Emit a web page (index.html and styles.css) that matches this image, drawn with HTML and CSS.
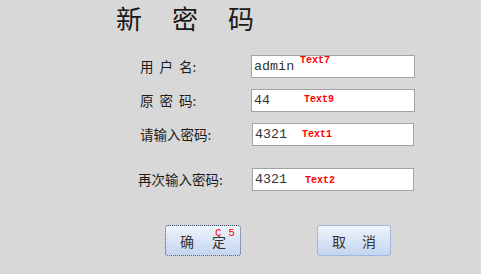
FILE: index.html
```html
<!DOCTYPE html>
<html lang="zh-CN">
<head>
<meta charset="utf-8">
<title>新密码</title>
<link rel="stylesheet" href="styles.css">
</head>
<body>
<div class="page">
  <h1 class="title"><span>新</span><span>密</span><span>码</span></h1>
  <div class="form">
    <div class="row r1">
      <label class="label spaced">用 户 名:</label>
      <div class="field"><span class="val">admin</span><span class="tag t7">Text7</span></div>
    </div>
    <div class="row r2">
      <label class="label spaced">原 密 码:</label>
      <div class="field"><span class="val">44</span><span class="tag t9">Text9</span></div>
    </div>
    <div class="row r3">
      <label class="label">请输入密码:</label>
      <div class="field f3"><span class="val">4321</span><span class="tag t1">Text1</span></div>
    </div>
    <div class="row r4">
      <label class="label l4">再次输入密码:</label>
      <div class="field f4"><span class="val">4321</span><span class="tag t2">Text2</span></div>
    </div>
  </div>
  <div class="buttons">
    <button class="btn ok"><span>确</span><span>定</span><span class="tag c5">C 5</span></button>
    <button class="btn cancel"><span>取</span><span>消</span></button>
  </div>
</div>
</body>
</html>
```
FILE: styles.css
```css
html, body {
  margin: 0;
  padding: 0;
  background: #d8d8d8;
  width: 481px;
  height: 274px;
  overflow: hidden;
}
.page {
  font-family: "Noto Sans CJK SC", "Noto Sans", sans-serif;
  color: #1c1c1c;
}
.title {
  margin: 0;
  padding: 1px 0 0 116px;
  height: 34px;
  display: flex;
  gap: 30px;
  font-size: 26px;
  line-height: 34px;
  font-weight: 400;
  color: #1a1a1a;
}
.form {
  padding-top: 20px;
}
.row {
  display: flex;
  align-items: center;
  height: 23px;
}
.r2 { margin-top: 11px; }
.r3 { margin-top: 11px; }
.r4 { margin-top: 22px; }
.label {
  width: 111px;
  padding-left: 140px;
  font-size: 13.5px;
  line-height: 23px;
  white-space: pre;
  box-sizing: border-box;
  flex: none;
  width: 251px;
}
.spaced { word-spacing: 3px; }
.l4 { padding-left: 138px; }
.f3, .f4 { margin-left: 1px; width: 162px !important; }
.field {
  position: relative;
  width: 164px;
  height: 23px;
  box-sizing: border-box;
  background: #fff;
  border: 1px solid #a3a3a3;
  padding-left: 2px;
  display: flex;
  align-items: center;
}
.val {
  font-family: "Liberation Mono", monospace;
  font-size: 13.4px;
  color: #333;
  line-height: 20px;
}
.tag {
  position: absolute;
  font-family: "Liberation Mono", monospace;
  font-weight: bold;
  font-size: 10px;
  line-height: 10px;
  color: #ff0000;
}
.t7 { left: 48px; top: 0px; }
.t9 { left: 52px; top: 5px; }
.t1 { left: 49px; top: 6px; }
.t2 { left: 52px; top: 7px; }
.buttons {
  display: flex;
  padding: 34px 0 0 165px;
  gap: 76px;
}
.btn {
  position: relative;
  height: 31px;
  box-sizing: border-box;
  border: 1px solid #9db7dd;
  border-radius: 3px;
  background: linear-gradient(#f0f4fb, #c3d5f0);
  font-family: "Noto Sans CJK SC", sans-serif;
  font-size: 14px;
  color: #333;
  display: flex;
  align-items: center;
  justify-content: center;
  gap: 18px;
  padding: 0;
}
.ok {
  width: 76px;
  border: 1px dotted #3a4a66;
  padding-left: 0px;
}
.cancel { width: 74px; gap: 16px; padding-left: 0; }
.c5 {
  left: 49px;
  top: 2px;
  font-weight: normal;
  font-size: 11px;
  line-height: 10px;
}
```
